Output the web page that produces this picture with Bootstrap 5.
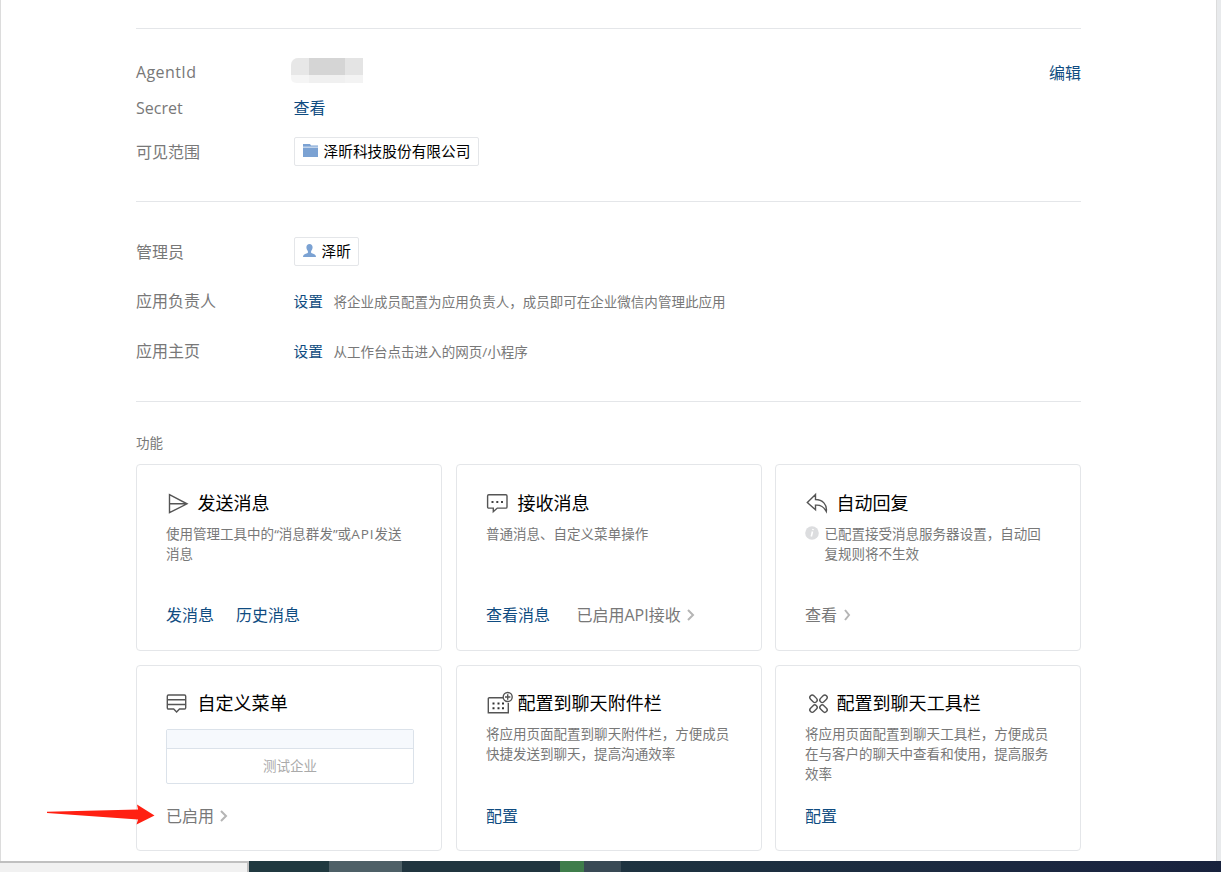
<!DOCTYPE html>
<html lang="zh-CN">
<head>
<meta charset="utf-8">
<meta name="viewport" content="width=device-width, initial-scale=1">
<title>应用详情</title>
<link href="https://cdn.jsdelivr.net/npm/bootstrap@5.3.0/dist/css/bootstrap.min.css" rel="stylesheet">
<style>
body{font-family:"Open Sans","Noto Sans CJK SC",sans-serif;font-size:16px;color:#787878;background:#fff;font-weight:400}
a{color:#0f4c81;text-decoration:none}
.screen{height:872px}
.page-area{height:861px;border-left:1px solid #dcdcdc}
.scroll-edge{width:5px;background:#e8eaec;border-left:1px solid #dcdcdc}
.content{width:945px;margin-left:135px}
.rule{height:1px;background:#e4e6e9}
.info{padding:25px 0}
.info-row{height:50px}
.info-row.short{height:36px}
.info-label{width:157.5px}
.info-label.cjk{padding-top:1px}
.agent{letter-spacing:.4px}
.edit,.info .note{padding-top:2px}
.tag{height:29px;border:1px solid #e4e6e9;border-radius:2px;padding:0 7.500px 0 7px;color:#000;font-size:14.7px}
.set{font-size:14.7px;width:40px}
.note{font-size:13.53px;line-height:20px}
.api{letter-spacing:1px}
.mosaic{width:72px;height:25px;margin:-4px 0 0 -3px;border-radius:7px 0 0 5px;overflow:hidden;background:linear-gradient(90deg,#f5f5f5 18px,#f0f0f0 18px 54px,#f3f3f3 54px)}
.mosaic div{height:17px;background:linear-gradient(90deg,#e7e7e7 18px,#d5d5d5 18px 54px,#e4e4e4 54px)}
.features{--bs-gutter-x:13.5px;--bs-gutter-y:14px}
.mid{padding-left:7.25px;padding-right:6.25px}
.feature{height:187px;border:1px solid #e4e6e9;border-radius:4px;padding:24px 28px 0 29px}
.row-two .feature{height:186px;padding-top:23px}
.feature h2{font-size:18.05px;line-height:28px;font-weight:400;color:#000;height:28px}
.feature h2 svg{width:31.5px;height:28px;flex:none}
.desc{height:80px;margin-top:7px}
.desc p{white-space:nowrap}
.actions{height:22px;line-height:22px}
.row-two .actions{margin-top:1px}
.preview{width:248px;height:55px;margin-top:5px;border:1px solid #dbe2ea;border-radius:2px;color:#aaa}
.preview-top{height:19px;background:#f6f9fd;border-bottom:1px solid #dbe2ea}
.pointer{left:46px;top:804px}
.taskbar-row{height:11px}
.status{width:249px;background:#f1f1f1;border-top:2px solid #c0c0c0;border-right:2px solid #c0c0c0}
.taskbar{background:linear-gradient(90deg,#203940 0 80px,#4e6067 80px 153px,#20353f 153px 311px,#3f7d4b 311px 335px,#394a55 335px 372px,#1e3340 372px,#1a2440 900px,#18223c)}
.g{stroke:#b5b5b5;stroke-width:2;fill:none}
.ico{fill:none;stroke:#555;stroke-width:1.4}
</style>
</head>
<body>
<div class="screen position-relative overflow-hidden d-flex flex-column">
<div class="page-area d-flex justify-content-between">
<main class="content">
<div style="height:28px"></div>
<div class="rule"></div>
<section class="info">
<div class="info-row short d-flex align-items-center"><div class="info-label agent">AgentId</div><div class="mosaic"><div></div></div><a href="#" class="ms-auto edit">编辑</a></div>
<div class="info-row short d-flex align-items-center"><div class="info-label">Secret</div><a href="#">查看</a></div>
<div class="info-row d-flex align-items-center"><div class="info-label cjk">可见范围</div>
<div class="tag d-flex align-items-center"><svg class="me-1" width="18" height="16" viewBox="0 0 18 16"><path d="M1 1h7l1 1.500h7V4H1z" fill="#7ba2d3"/><path d="M1 4.500h15V14H1z" fill="#7ba2d3"/><path d="M1 4h15" stroke="#c5d6ec"/></svg>泽昕科技股份有限公司</div></div>
</section>
<div class="rule"></div>
<section class="info pt-4">
<div class="info-row d-flex align-items-center"><div class="info-label cjk">管理员</div>
<div class="tag d-flex align-items-center"><svg class="me-1" width="16" height="16" viewBox="0 0 16 16"><path d="M7.500 1C5.600 1 4.400 2.300 4.400 4.300c0 1.600.6 2.700 1.500 3.700v1.700c-.4 1-4.900.8-4.900 4.300h13c0-3.500-4.500-3.300-4.900-4.300V8c.9-1 1.500-2.100 1.500-3.700C10.600 2.300 9.400 1 7.500 1z" fill="#7ba2d3"/></svg>泽昕</div></div>
<div class="info-row d-flex align-items-center"><div class="info-label">应用负责人</div><a href="#" class="set">设置</a><span class="note">将企业成员配置为应用负责人，成员即可在企业微信内管理此应用</span></div>
<div class="info-row d-flex align-items-center"><div class="info-label">应用主页</div><a href="#" class="set">设置</a><span class="note">从工作台点击进入的网页/小程序</span></div>
</section>
<div class="rule"></div>
<div class="note" style="padding:31px 0 11px">功能</div>
<div class="row features">
<div class="col-4"><div class="feature">
<h2 class="d-flex mb-0"><svg viewBox="0 0 31.5 28"><path class="ico" d="M3.500 5.700 21 14.800 3.500 23.700zM3.500 14.700H20"/></svg>发送消息</h2>
<div class="desc note"><p class="mb-0">使用管理工具中的“消息群发”或<span class="api">API</span>发送<br>消息</p></div>
<div class="actions d-flex"><a href="#">发消息</a><a href="#" style="margin-left:22px">历史消息</a></div>
</div></div>
<div class="col-4 mid"><div class="feature">
<h2 class="d-flex mb-0"><svg viewBox="0 0 31.5 28"><path class="ico" d="M2.800 5.700h17q1.200 0 1.200 1.200v11q0 1.200-1.200 1.200h-8.500l-4 3.600v-3.600H2.800q-1.200 0-1.200-1.200v-11q0-1.200 1.200-1.200z"/><path d="M5.500 12h2v2h-2zM10.300 12h2v2h-2zM15 12h2v2h-2z" fill="#444"/></svg>接收消息</h2>
<div class="desc note"><p class="mb-0">普通消息、自定义菜单操作</p></div>
<div class="actions d-flex"><a href="#">查看消息</a><span style="margin-left:26.5px">已启用API接收</span><svg class="ms-1" width="12" height="22"><path class="g" d="m3 6 5 5-5 5"/></svg></div>
</div></div>
<div class="col-4"><div class="feature">
<h2 class="d-flex mb-0"><svg viewBox="0 0 31.5 28"><path class="ico" d="m10.500 5.500-8.200 8 8.200 7.300v-4.600c4.500-.5 8 .8 10.800 6.300 1-7-3.800-12-10.800-12z"/></svg>自动回复</h2>
<div class="desc note d-flex"><svg width="19.500" height="20" class="flex-shrink-0" viewBox="0 0 19.500 20"><circle cx="7" cy="9" r="6.800" fill="#dcdddf"/><path d="m7.500 7.500-1.200 5M8.100 5l-.2 1.200" stroke="#fff" stroke-width="1.600"/></svg><p class="mb-0">已配置接受消息服务器设置，自动回<br>复规则将不生效</p></div>
<div class="actions d-flex"><span>查看</span><svg class="ms-1" width="12" height="22"><path class="g" d="m4 6 4 5-4 5"/></svg></div>
</div></div>
<div class="col-4 row-two"><div class="feature">
<h2 class="d-flex mb-0"><svg viewBox="0 0 31.5 28"><path class="ico" d="M2.500 6h16q1.200 0 1.200 1.200v11.600q0 1.200-1.200 1.200h-5l-2.900 3-2.900-3H2.500q-1.200 0-1.200-1.200V7.200Q1.300 6 2.500 6zM1.500 10.800h18M1.500 15.500h18"/></svg>自定义菜单</h2>
<div class="desc note d-flex"><div class="preview flex-shrink-0"><div class="preview-top"></div><div class="text-center" style="padding-top:7px">测试企业</div></div></div>
<div class="actions d-flex"><span>已启用</span><svg class="ms-1" width="12" height="22"><path class="g" d="m3 6 5 5-5 5"/></svg></div>
</div></div>
<div class="col-4 row-two mid"><div class="feature">
<h2 class="d-flex mb-0"><svg viewBox="0 0 31.5 28"><path class="ico" d="M17 8.700H3.300q-1 0-1 1v14h20V14"/><circle class="ico" cx="21.700" cy="8" r="4.500"/><path class="ico" d="M19 8h5.400M21.700 5.300v5.400"/><path d="M6.500 13.500h2v2h-2zM11.500 13.500h2v2h-2zM16 13.500h2v2h-2zM6.500 18.200h2v2h-2zM11.500 18.200h2v2h-2zM16 18.200h2v2h-2z" fill="#333"/></svg>配置到聊天附件栏</h2>
<div class="desc note"><p class="mb-0">将应用页面配置到聊天附件栏，方便成员<br>快捷发送到聊天，提高沟通效率</p></div>
<div class="actions"><a href="#">配置</a></div>
</div></div>
<div class="col-4 row-two"><div class="feature">
<h2 class="d-flex mb-0"><svg viewBox="0 0 31.5 28"><g class="ico"><rect x="4.300" y="7.400" width="8.400" height="4.800" rx="2.400" transform="rotate(45 8.500 9.800)"/><rect x="14.300" y="7.400" width="8.400" height="4.800" rx="2.400" transform="rotate(-45 18.500 9.800)"/><rect x="4.300" y="17.200" width="8.400" height="4.800" rx="2.400" transform="rotate(-45 8.500 19.600)"/><rect x="14.300" y="17.200" width="8.400" height="4.800" rx="2.400" transform="rotate(45 18.500 19.600)"/></g></svg>配置到聊天工具栏</h2>
<div class="desc note"><p class="mb-0">将应用页面配置到聊天工具栏，方便成员<br>在与客户的聊天中查看和使用，提高服务<br>效率</p></div>
<div class="actions"><a href="#">配置</a></div>
</div></div>
</div>
</main>
<div class="scroll-edge"></div>
</div>
<div class="taskbar-row d-flex"><div class="status"></div><div class="taskbar flex-grow-1"></div></div>
<svg class="pointer position-absolute" width="110" height="22" viewBox="0 0 110 22"><path d="M1 7.700 92 5.500 91 .5 108.500 11.500 90.500 20.500 92 15.500 1 9z" fill="#ff2012"/></svg>
</div>
<script src="https://cdn.jsdelivr.net/npm/bootstrap@5.3.0/dist/js/bootstrap.bundle.min.js"></script>
</body>
</html>
